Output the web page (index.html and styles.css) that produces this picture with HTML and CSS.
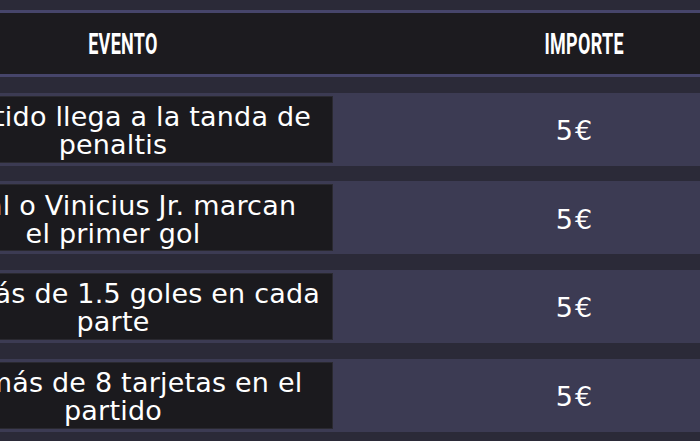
FILE: index.html
```html
<!DOCTYPE html>
<html lang="es">
<head>
<meta charset="utf-8">
<title>Apuestas</title>
<link rel="stylesheet" href="styles.css">
</head>
<body>
<div class="table">
  <div class="thead">
    <div class="th"><span class="th-label">EVENTO</span></div>
    <div class="th th-right"><span class="th-label">IMPORTE</span></div>
  </div>
  <div class="row">
    <div class="cell-event">El partido llega a la tanda de<br>penaltis</div>
    <div class="cell-amount">5€</div>
  </div>
  <div class="row">
    <div class="cell-event">Yamal o Vinicius Jr. marcan<br>el primer gol</div>
    <div class="cell-amount">5€</div>
  </div>
  <div class="row">
    <div class="cell-event">Hay más de 1.5 goles en cada<br>parte</div>
    <div class="cell-amount">5€</div>
  </div>
  <div class="row">
    <div class="cell-event">Hay más de 8 tarjetas en el<br>partido</div>
    <div class="cell-amount">5€</div>
  </div>
</div>
</body>
</html>
```
FILE: styles.css
```css
html, body {
  margin: 0;
  padding: 0;
  background: #2b2a38;
  overflow: hidden;
}
body {
  width: 700px;
  height: 441px;
}
.table {
  width: 922px;
  margin-left: -107px;
  padding-top: 10px;
}
.thead {
  display: grid;
  grid-template-columns: 440px 482px;
  background: #1c1b1f;
  border-top: 3px solid #46456a;
  border-bottom: 3px solid #46456a;
  height: 61px;
}
.th {
  display: flex;
  align-items: center;
  justify-content: center;
  padding-left: 19px;
}
.th-right {
  padding-left: 21px;
}
.th-label {
  display: inline-block;
  font-family: Roboto, "Liberation Sans", sans-serif;
  font-weight: 700;
  font-size: 30px;
  color: #ffffff;
  transform: scaleX(0.6);
  letter-spacing: 0.5px;
}
.row {
  display: grid;
  grid-template-columns: 440px 480px;
  column-gap: 2px;
  background: #3c3b53;
  padding: 3px 0;
  height: 67px;
  margin-top: 15.67px;
}
.cell-event {
  background: #1b1a1e;
  border: 1px solid #2a2930;
  display: flex;
  align-items: center;
  justify-content: center;
  text-align: center;
  font-family: "DejaVu Sans", sans-serif;
  font-size: 27px;
  letter-spacing: 0.2px;
  line-height: 28px;
  padding-top: 4px;
  color: #ffffff;
  white-space: nowrap;
}
.cell-amount {
  display: flex;
  align-items: center;
  justify-content: center;
  font-family: "DejaVu Sans", sans-serif;
  font-size: 27px;
  letter-spacing: 2px;
  padding-top: 3px;
  color: #ffffff;
}
```
